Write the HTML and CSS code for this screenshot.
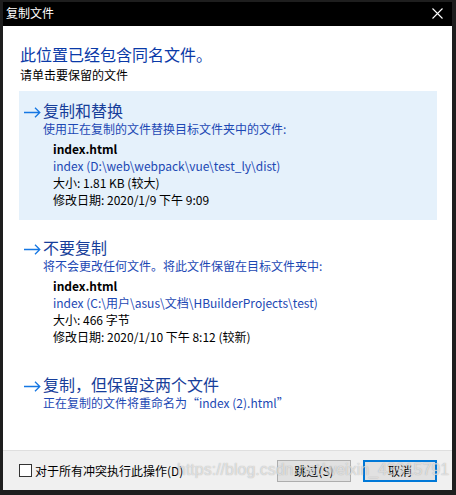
FILE: index.html
```html
<!DOCTYPE html>
<html lang="zh-CN">
<head>
<meta charset="utf-8">
<title>复制文件</title>
<link rel="stylesheet" href="styles.css">
</head>
<body>
<div class="screen">
  <div class="dialog">
    <div class="titlebar">
      <span class="title">复制文件</span>
      <svg class="close" width="11" height="11" viewBox="0 0 11 11"><path d="M0.5 0.5 L10.5 10.5 M10.5 0.5 L0.5 10.5" stroke="#fff" stroke-width="1.1" fill="none"/></svg>
    </div>
    <div class="content">
      <div class="main-instr">此位置已经包含同名文件。</div>
      <div class="hint">请单击要保留的文件</div>

      <div class="option selected">
        <div class="opt-head">
          <svg class="arrow" width="17" height="11" viewBox="0 0 17 11"><path d="M0 5.5 H16 M11 0.7 L15.8 5.5 L11 10.3" stroke="#1577e3" stroke-width="1.3" fill="none"/></svg>
          <span class="opt-title">复制和替换</span>
        </div>
        <div class="opt-sub">使用正在复制的文件替换目标文件夹中的文件:</div>
        <div class="details">
          <div class="fname">index.html</div>
          <div class="fpath">index (D:\web\webpack\vue\test_ly\dist)</div>
          <div class="fmeta">大小: 1.81 KB (较大)</div>
          <div class="fmeta">修改日期: 2020/1/9 下午 9:09</div>
        </div>
      </div>

      <div class="option">
        <div class="opt-head">
          <svg class="arrow" width="17" height="11" viewBox="0 0 17 11"><path d="M0 5.5 H16 M11 0.7 L15.8 5.5 L11 10.3" stroke="#1577e3" stroke-width="1.3" fill="none"/></svg>
          <span class="opt-title">不要复制</span>
        </div>
        <div class="opt-sub">将不会更改任何文件。将此文件保留在目标文件夹中:</div>
        <div class="details">
          <div class="fname">index.html</div>
          <div class="fpath">index (C:\用户\asus\文档\HBuilderProjects\test)</div>
          <div class="fmeta">大小: 466 字节</div>
          <div class="fmeta">修改日期: 2020/1/10 下午 8:12 (较新)</div>
        </div>
      </div>

      <div class="option">
        <div class="opt-head">
          <svg class="arrow" width="17" height="11" viewBox="0 0 17 11"><path d="M0 5.5 H16 M11 0.7 L15.8 5.5 L11 10.3" stroke="#1577e3" stroke-width="1.3" fill="none"/></svg>
          <span class="opt-title">复制，但保留这两个文件</span>
        </div>
        <div class="opt-sub">正在复制的文件将重命名为“index (2).html”</div>
      </div>
    </div>
    <div class="footer">
      <label class="check"><span class="box"></span>对于所有冲突执行此操作(D)</label>
      <div class="buttons">
        <button class="btn">跳过(S)</button>
        <button class="btn primary">取消</button>
      </div>
    </div>
    <div class="watermark">https://blog.csdn.net/weixin_43915791</div>
  </div>
</div>
</body>
</html>
```

FILE: styles.css
```css
html, body {
  margin: 0;
  padding: 0;
  background: #1e1e1e;
}
.screen {
  width: 456px;
  height: 495px;
  padding: 2px 4px 5px 3px;
  box-sizing: border-box;
  background: #1e1e1e;
  overflow: hidden;
}
.dialog {
  position: relative;
  width: 449px;
  height: 488px;
  display: flex;
  flex-direction: column;
  background: #fff;
  font-family: "Noto Sans CJK SC", "Noto Sans", sans-serif;
  font-size: 12px;
  color: #000;
}
.titlebar {
  height: 24px;
  flex: none;
  background: #000;
  color: #fff;
  display: flex;
  align-items: center;
  justify-content: space-between;
  padding: 0 9px 0 3px;
}
.title {
  font-size: 12px;
  line-height: 16px;
  margin-top: -2px;
}
.close {
  margin-top: -2px;
}
.content {
  flex: 1;
  padding: 18px 15px 0 16px;
}
.main-instr {
  font-size: 16px;
  line-height: 20px;
  color: #0a3aa8;
  padding-left: 1px;
}
.hint {
  line-height: 18px;
  margin-top: 2px;
  padding-left: 1px;
}
.option {
  margin-top: 7px;
  padding: 9px 0 12px 0;
}
.option + .option {
  margin-top: 8px;
}
.option.selected {
  background: #e5f1fb;
}
.opt-head {
  display: flex;
  align-items: center;
  height: 20px;
  padding-left: 5px;
}
.arrow {
  margin-right: 2px;
  margin-top: 4px;
}
.opt-title {
  font-size: 16px;
  line-height: 20px;
  color: #173e9a;
}
.opt-sub {
  padding-left: 24px;
  line-height: 18px;
  color: #1c48b4;
}
.details {
  margin-top: 2px;
  padding-left: 34px;
}
.details > div {
  line-height: 17px;
}
.fname {
  font-weight: bold;
}
.fpath {
  color: #1c48b4;
}
.footer {
  flex: none;
  height: 39px;
  background: #f0f0f0;
  border-top: 1px solid #dfdfdf;
  display: flex;
  align-items: center;
  justify-content: space-between;
  padding: 0 15px 0 16px;
}
.check {
  display: flex;
  align-items: center;
  gap: 3px;
  line-height: 16px;
}
.box {
  width: 11px;
  height: 11px;
  border: 1px solid #333;
  background: #fff;
}
.buttons {
  display: flex;
  gap: 12px;
}
.btn {
  width: 74px;
  height: 22px;
  box-sizing: border-box;
  background: #e1e1e1;
  border: 1px solid #adadad;
  font-family: "Noto Sans CJK SC", sans-serif;
  font-size: 12px;
  color: #000;
  padding: 0;
}
.btn.primary {
  border: 2px solid #0078d7;
}
.watermark {
  position: absolute;
  left: 174px;
  top: 459px;
  font-family: "Liberation Sans", Arial, sans-serif;
  font-size: 16px;
  color: rgba(255, 255, 255, 0.6);
  text-shadow: 0 0 1px rgba(110, 110, 110, 0.6);
  white-space: nowrap;
  pointer-events: none;
}
```
